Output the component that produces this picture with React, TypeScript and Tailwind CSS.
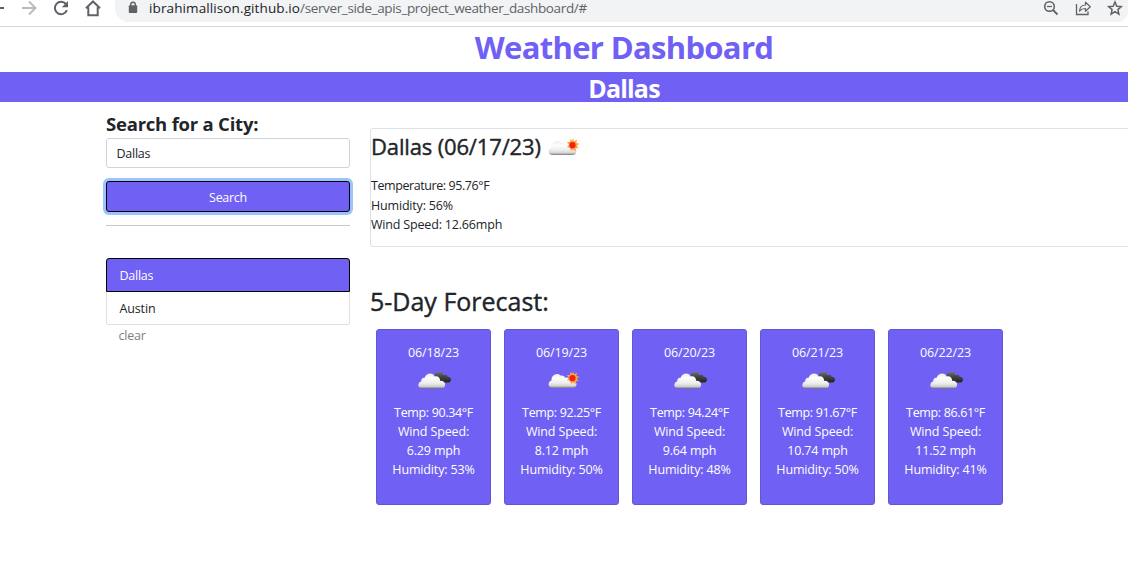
import type { ReactNode } from 'react';

type Sky = 'clouds' | 'sun';

const forecast: { date: string; sky: Sky; temp: string; wind: string; humidity: string }[] = [
  { date: '06/18/23', sky: 'clouds', temp: '90.34', wind: '6.29', humidity: '53' },
  { date: '06/19/23', sky: 'sun', temp: '92.25', wind: '8.12', humidity: '50' },
  { date: '06/20/23', sky: 'clouds', temp: '94.24', wind: '9.64', humidity: '48' },
  { date: '06/21/23', sky: 'clouds', temp: '91.67', wind: '10.74', humidity: '50' },
  { date: '06/22/23', sky: 'clouds', temp: '86.61', wind: '11.52', humidity: '41' },
];

function WeatherIcon({ sky, id }: { sky: Sky; id: string }) {
  return (
    <svg width="40" height="24" viewBox="0.5 0.5 40 24" className="block shrink-0">
      <defs>
        <linearGradient id={id} x1="0" y1="0" x2="0" y2="1">
          <stop offset="0" stopColor="#ececec" />
          <stop offset="0.3" stopColor="#fdfdfd" />
          <stop offset="0.65" stopColor="#eeeeee" />
          <stop offset="0.86" stopColor="#d2d2d2" />
          <stop offset="1" stopColor="#777777" />
        </linearGradient>
        <linearGradient id={id + 'd'} x1="0" y1="0" x2="0" y2="1">
          <stop offset="0" stopColor="#777777" />
          <stop offset="0.4" stopColor="#484848" />
          <stop offset="1" stopColor="#222222" />
        </linearGradient>
      </defs>
      {sky === 'clouds' ? (
        <>
          <path
            d="M22 11c-2.500-4 1-7.500 4.500-6.500 2 .2 3 1.300 3.300 3 2-.8 4 0 4.500 1.700 2.200.2 3.400 1.600 3.200 3.200-.2 1.600-1.500 2.600-3.500 2.600h-8z"
            fill={'url(#' + id + 'd)'}
          />
          <path
            d="M8.500 21c-4.600 0-4.800-6-.8-7-.3-2.600 1.700-4 3.500-3.700.9-5 8.300-6.200 10-1.300 3-.9 5.600 1.200 5.400 4.400 3.300-.3 5.200 1.600 5 4-.2 2.200-1.700 3.600-4.100 3.600z"
            fill={'url(#' + id + ')'}
          />
        </>
      ) : (
        <>
          <path
            d="M11 20.500c-5 0-5-6.600-.9-7.500C9.300 8.500 15 4 19 8c2-.4 4 .5 4.500 2.200 3-.6 5.700.8 6 3 3.400-.4 5.600 1.300 5.500 3.600-.1 2.300-1.600 3.700-4 3.700z"
            fill={'url(#' + id + ')'}
          />
          <path
            d="M31.500 4l1.200 2.800 2.800-1.600-.6 3.200 3 .8-2.500 2 1.800 2.600-3.100-.1.200 3.300-2.800-2-2 1.400-1-2.800-3-1.200 2-2.200-2.200-2.800 3.200.1.200-3 2 1.800z"
            fill="#f7a845"
          />
          <circle cx="31" cy="10.700" r="3.100" fill="#f5200f" />
        </>
      )}
    </svg>
  );
}

function BrowserBar() {
  return (
    <header className="flex h-[27px] items-start border-b border-[#d5d7da] text-[#5f6368]">
      <svg width="115" height="20" viewBox="0 0 115 20" className="shrink-0" fill="none">
        <path d="M0 8h4" stroke="#5f6368" strokeWidth="2" />
        <path d="M22 8h13M29 1.500L35.500 8 29 14.500" stroke="#b9bbbe" strokeWidth="2" />
        <path d="M66 4.200A6.200 6.200 0 1 0 66.900 10.200" stroke="#5f6368" strokeWidth="2" />
        <path d="M68 1v6.200h-6.200z" fill="#5f6368" />
        <path d="M86 8.300L93 1.500l7 6.800M88.300 7.200v8h9.400v-8" stroke="#5f6368" strokeWidth="2" />
      </svg>
      <div className="flex h-[22px] grow items-start rounded-bl-[14px] rounded-br-[10px] bg-[#f1f3f4] pl-[13px] pr-[5px]">
        <svg width="10" height="14" viewBox="0 0 10 14" className="mt-px shrink-0">
          <rect x="0.800" y="4.300" width="8.400" height="7.700" rx="1" fill="#5f6368" />
          <path d="M2.700 5V3.500a2.300 2.300 0 0 1 4.600 0V5" fill="none" stroke="#5f6368" strokeWidth="1.400" />
        </svg>
        <p className="-mt-px ml-[11px] whitespace-nowrap text-[13.500px] leading-[18px]">
          <span className="tracking-[0.110px] text-[#202124]">ibrahimallison.github.io</span>
          <span className="tracking-[-0.360px]">/server_side_apis_project_weather_dashboard/#</span>
        </p>
        <svg width="84" height="18" viewBox="0 0 84 18" className="ml-auto shrink-0" fill="none" stroke="#5f6368">
          <circle cx="10.500" cy="6.500" r="4.800" strokeWidth="1.600" />
          <path d="M14 10l4.500 4.500" strokeWidth="1.800" />
          <path d="M8 6.500h5" strokeWidth="1.300" />
          <path d="M37.500 4v10.500h11.500v-3" strokeWidth="1.300" />
          <path d="M40.500 11c.3-4 2.700-6 6-6V2.200l4.800 4.600-4.800 4.500V8.500c-2.700 0-4.500.7-6 2.500z" strokeWidth="1.200" strokeLinejoin="round" />
          <path d="M76 2l1.800 4.200 4.500.4-3.400 3 1 4.500-3.900-2.400-3.900 2.400 1-4.500-3.400-3 4.500-.4z" strokeWidth="1.500" />
        </svg>
      </div>
    </header>
  );
}

function Line({ children }: { children: ReactNode }) {
  return <p className="whitespace-nowrap">{children}</p>;
}

export default function App() {
  return (
    <div className="h-[567px] overflow-hidden bg-white font-['Open_Sans','Noto_Sans',sans-serif] text-[12.500px] leading-[19.200px] text-[#212529]">
      <BrowserBar />
      <div className="w-[1248px]">
        <h1 className="h-[45px] text-center text-[31px] font-bold leading-[40px] tracking-[-0.670px] text-[#7060f4]">
          Weather Dashboard
        </h1>
        <h2 className="h-[30px] bg-[#7060f4] text-center text-[25px] font-bold leading-[33px] text-white">
          <span className="tracking-[-0.800px]">Dallas</span>
        </h2>
        <main className="flex gap-5 pl-[106px]">
          <aside className="w-[244px] shrink-0 pt-[11px]">
            <h3 className="h-[25px] whitespace-nowrap text-[18.500px] font-bold leading-[22px] tracking-[-0.220px]">
              Search for a City:
            </h3>
            <input
              defaultValue="Dallas"
              className="block h-[30px] w-full rounded-[3px] border border-[#ced4da] bg-white px-[9.500px] tracking-[-0.250px] text-[#212529] outline-none"
            />
            <button className="mt-[13px] block h-[31px] w-full rounded-[3px] border border-black bg-[#7060f4] pt-[2px] tracking-[-0.300px] text-white shadow-[0_0_0_3px_#9dc3fb]">
              Search
            </button>
            <hr className="mt-[13px] border-[#c8c9ca]" />
            <div className="mt-8">
              <button className="block h-[34px] w-full rounded-t-[3px] border border-black bg-[#7060f4] px-[12.500px] pt-px text-left tracking-[-0.250px] text-white">
                Dallas
              </button>
              <button className="block h-[33px] w-full rounded-b-[3px] border border-t-0 border-[#dfdfdf] px-[12.500px] pt-px text-left tracking-[-0.150px]">
                Austin
              </button>
            </div>
            <button className="ml-[12.500px] mt-px block tracking-[-0.200px] text-[#808080]">clear</button>
          </aside>
          <div className="grow pt-[26px]">
            <section className="h-[119px] rounded-[3px] border border-[#dee2e6] tracking-[-0.180px]">
              <h3 className="flex h-[47px] items-start whitespace-nowrap text-[22px] leading-[35px]">
                <span className="w-[171px] shrink-0 tracking-[-0.150px] [-webkit-text-stroke:0.4px_#212529]">
                  Dallas (06/17/23)
                </span>
                <span className="mt-[6px]">
                  <WeatherIcon sky="sun" id="today" />
                </span>
              </h3>
              <div className="pt-[0.400px]">
                <div className="tracking-[-0.420px]">
                  <Line>Temperature: 95.76°F</Line>
                </div>
                <Line>Humidity: 56%</Line>
                <Line>Wind Speed: 12.66mph</Line>
              </div>
            </section>
            <h3 className="mt-[38px] h-[44px] whitespace-nowrap text-[25px] leading-[32px] [-webkit-text-stroke:0.4px_#212529]">
              5-Day Forecast:
            </h3>
            <div className="flex gap-[13px] pl-[6px]">
              {forecast.map((day) => (
                <article
                  key={day.date}
                  className="h-[176px] w-[115px] rounded-[3px] border border-[#6355d8] bg-[#7060f4] pt-[13px] text-center tracking-[-0.150px] text-white"
                >
                  <Line>{day.date}</Line>
                  <div className="flex h-[40.500px] justify-center pt-[6px]">
                    <WeatherIcon sky={day.sky} id={'d' + day.date.slice(3, 5)} />
                  </div>
                  <div className="tracking-[-0.350px]">
                    <Line>Temp: {day.temp}°F</Line>
                  </div>
                  <Line>Wind Speed:</Line>
                  <Line>{day.wind} mph</Line>
                  <Line>Humidity: {day.humidity}%</Line>
                </article>
              ))}
            </div>
          </div>
        </main>
      </div>
    </div>
  );
}
